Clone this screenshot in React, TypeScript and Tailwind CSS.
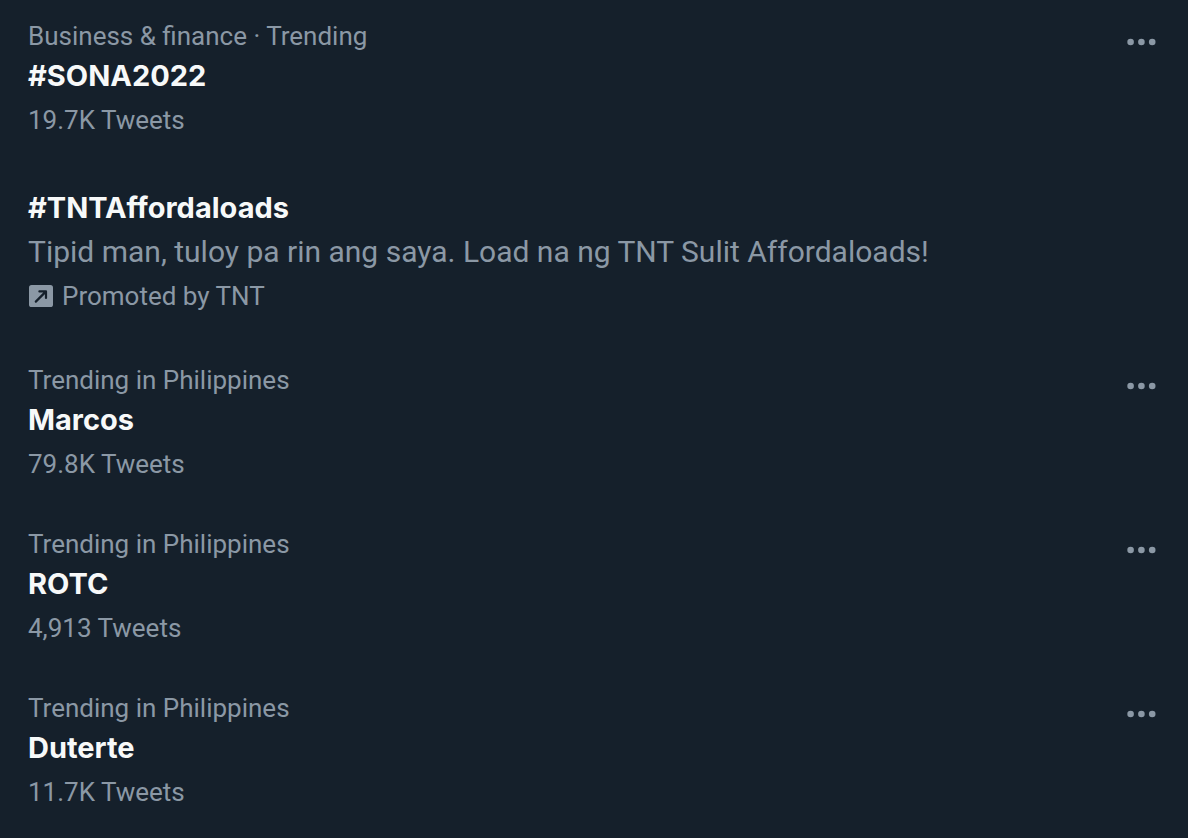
type Trend = {
    title: string;
    context?: string;
    tweets?: string;
    description?: string;
    promotedBy?: string;
};

const trends: Trend[] = [
    { context: 'Business & finance · Trending', title: '#SONA2022', tweets: '19.7K Tweets' },
    {
        title: '#TNTAffordaloads',
        description: 'Tipid man, tuloy pa rin ang saya. Load na ng TNT Sulit Affordaloads!',
        promotedBy: 'TNT',
    },
    { context: 'Trending in Philippines', title: 'Marcos', tweets: '79.8K Tweets' },
    { context: 'Trending in Philippines', title: 'ROTC', tweets: '4,913 Tweets' },
    { context: 'Trending in Philippines', title: 'Duterte', tweets: '11.7K Tweets' },
];

function MoreIcon() {
    return (
        <svg viewBox="0 0 30 8" className="w-[30px] h-2" fill="currentColor" aria-hidden="true">
            <circle cx="4.6" cy="4" r="3.3" />
            <circle cx="15.4" cy="4" r="3.3" />
            <circle cx="26.2" cy="4" r="3.3" />
        </svg>
    );
}

function PromotedIcon() {
    return (
        <svg viewBox="0 0 26 26" className="w-[26px] h-[26px] shrink-0" aria-hidden="true">
            <rect x="1" y="2" width="24" height="22" rx="2.6" fill="currentColor" />
            <path
                d="M7.8 18.6 17.8 8.6M11.4 8.4H18V15"
                fill="none"
                stroke="#15202b"
                strokeWidth="2.2"
                strokeLinecap="round"
                strokeLinejoin="round"
            />
        </svg>
    );
}

function TrendItem({ trend }: { trend: Trend }) {
    return (
        <li className="flex items-start justify-between">
            <div className="min-w-0">
                {trend.context && <p className="text-[26px] leading-8">{trend.context}</p>}
                <h2 className="font-['Inter',sans-serif] text-[29px] leading-10 font-bold text-[#f7f9f9] mt-1">{trend.title}</h2>
                {trend.description && <p className="text-[30px] leading-10 mt-1">{trend.description}</p>}
                {trend.tweets && <p className="text-[26px] leading-8 mt-2">{trend.tweets}</p>}
                {trend.promotedBy && (
                    <p className="flex items-center gap-2 text-[26px] leading-8 mt-2 mb-1">
                        <PromotedIcon />
                        <span>Promoted by {trend.promotedBy}</span>
                    </p>
                )}
            </div>
            {!trend.promotedBy && (
                <button type="button" aria-label="More" className="flex items-center h-11 shrink-0">
                    <MoreIcon />
                </button>
            )}
        </li>
    );
}

function App() {
    return (
        <main className="min-h-screen bg-[#15202b] text-[#8b98a5] font-['Roboto',sans-serif] pl-7 pr-8 py-5">
            <ul className="flex flex-col gap-12">
                {trends.map((trend) => (
                    <TrendItem key={trend.title} trend={trend} />
                ))}
            </ul>
        </main>
    );
}

export default App;
